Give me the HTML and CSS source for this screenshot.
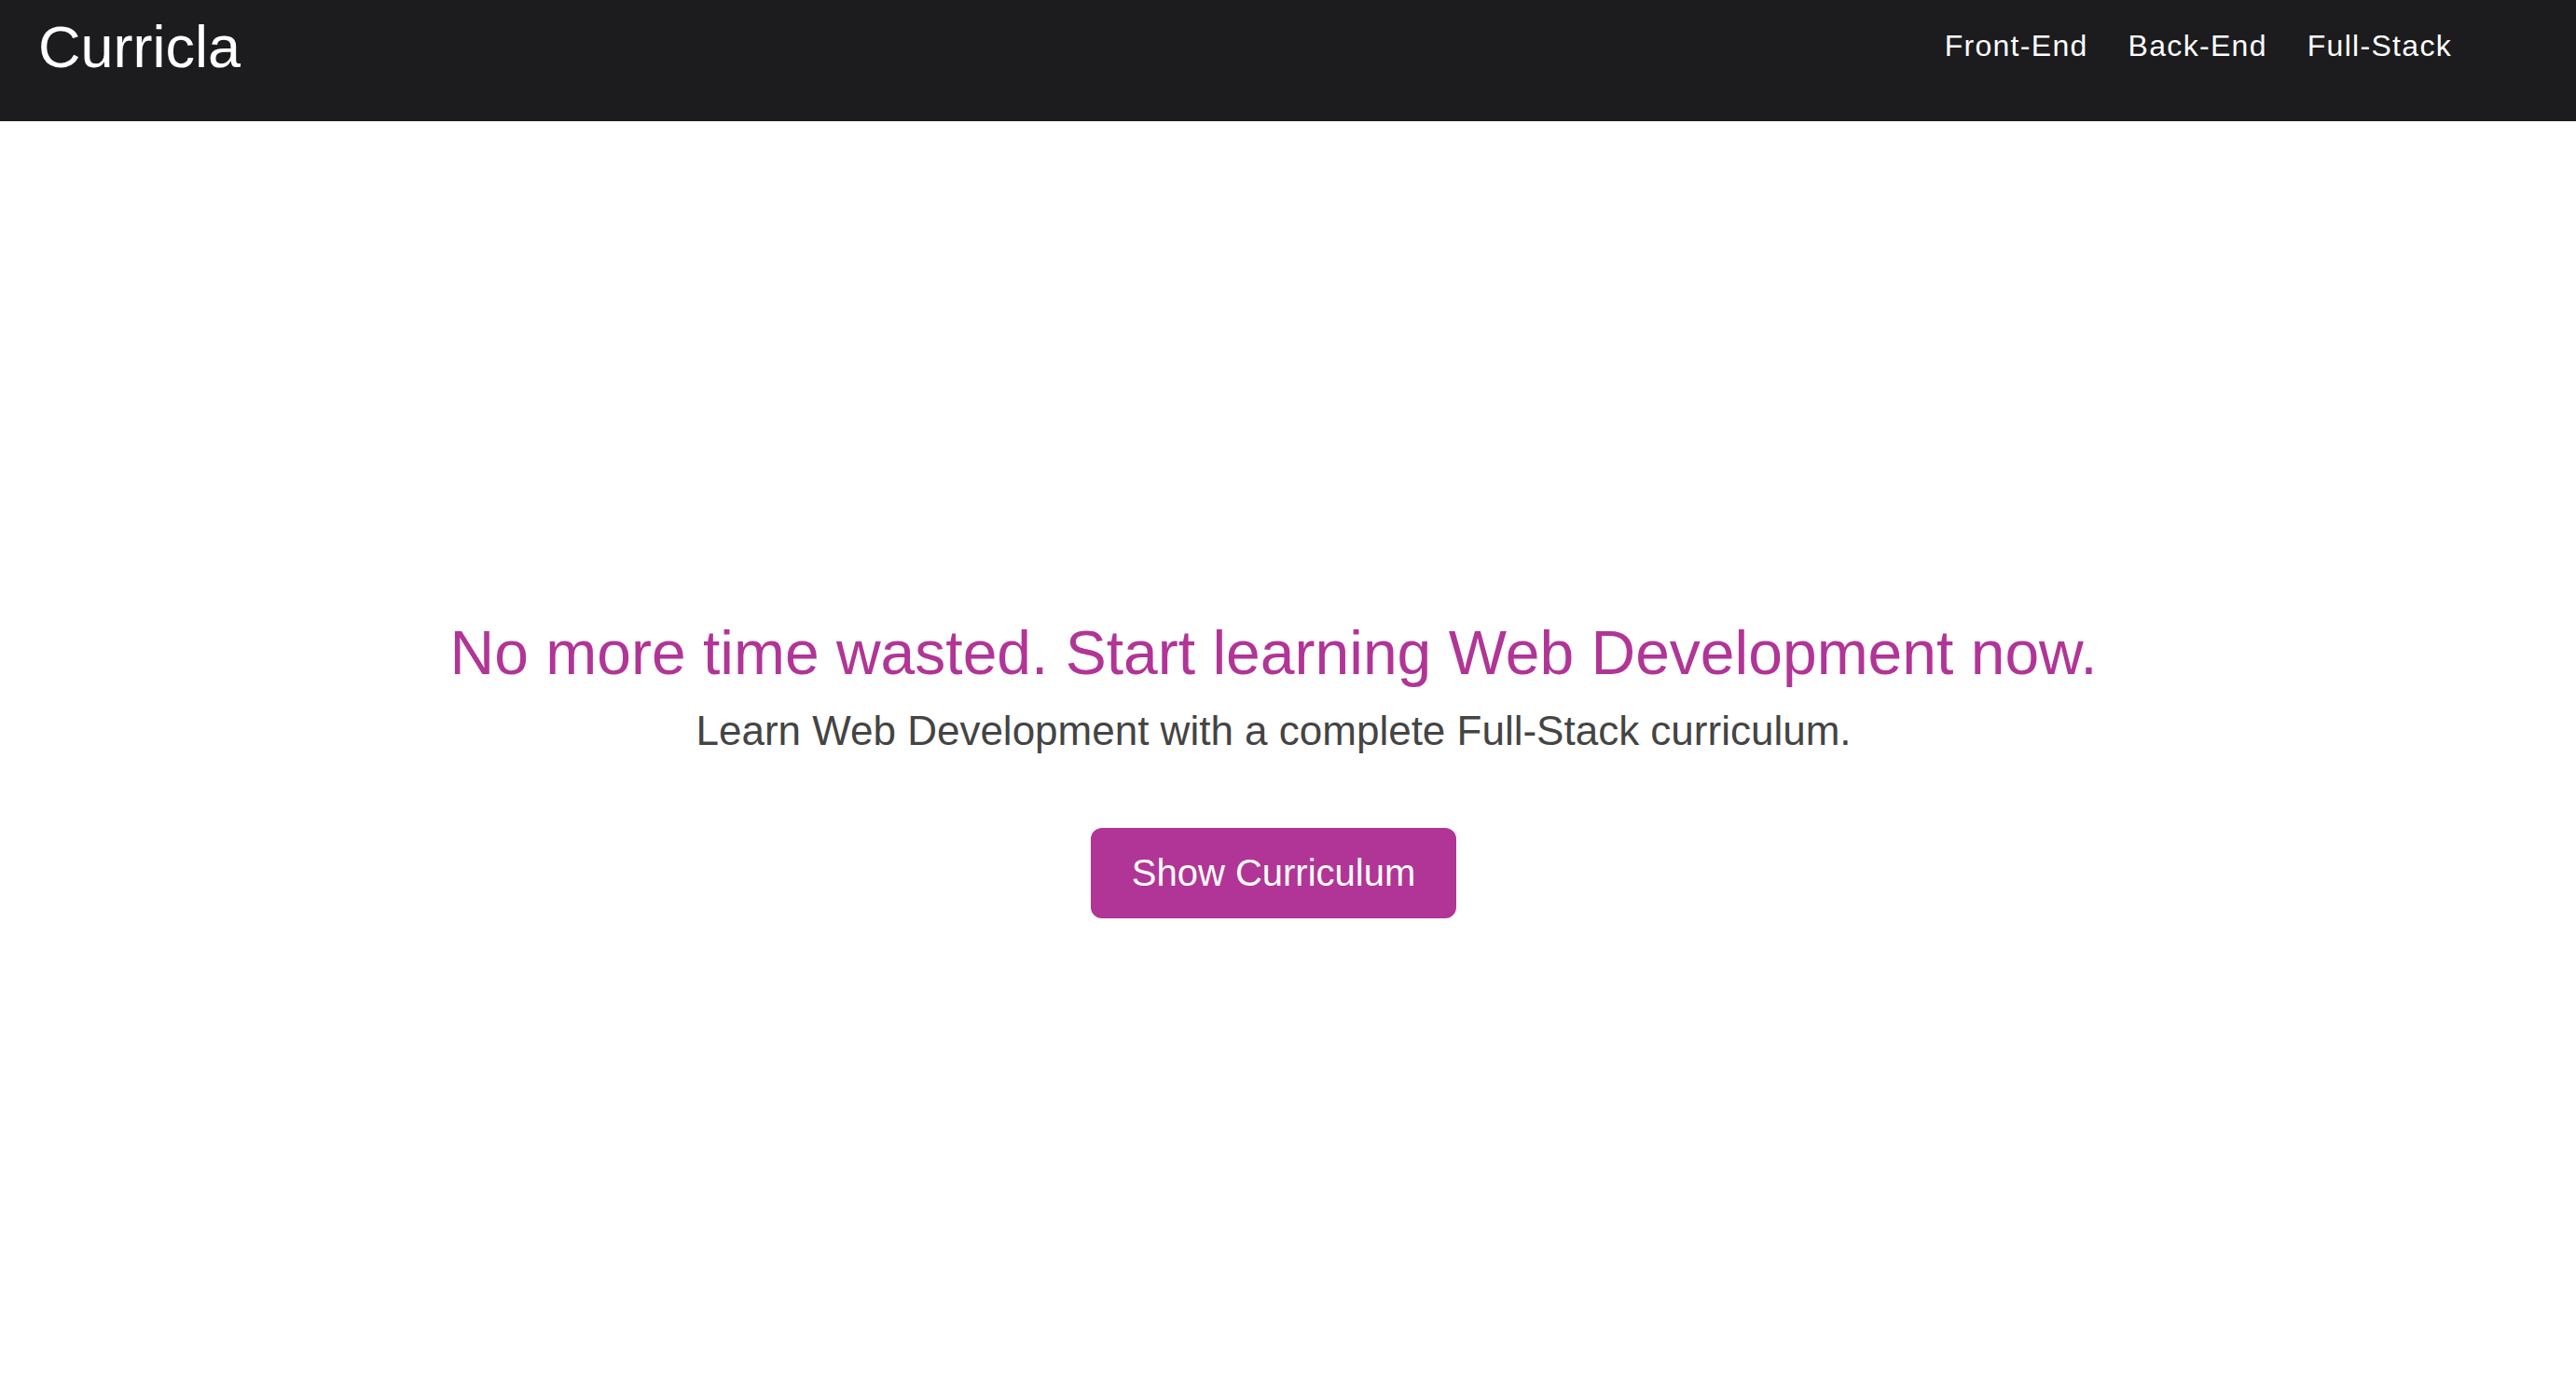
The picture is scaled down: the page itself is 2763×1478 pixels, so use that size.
FILE: index.html
```html
<!DOCTYPE html>
<html lang="en">
<head>
<meta charset="utf-8">
<title>Curricla</title>
<link rel="stylesheet" href="styles.css">
</head>
<body>
<header class="topbar">
  <a class="logo" href="#">Curricla</a>
  <nav class="nav">
    <a href="#" class="nav-link">Front-End</a>
    <a href="#" class="nav-link">Back-End</a>
    <a href="#" class="nav-link">Full-Stack</a>
  </nav>
</header>
<main class="hero">
  <h1 class="hero-title">No more time wasted. Start learning Web Development now.</h1>
  <p class="hero-sub">Learn Web Development with a complete Full-Stack curriculum.</p>
  <a href="#" class="btn">Show Curriculum</a>
</main>
</body>
</html>
```
FILE: styles.css
```css
* { box-sizing: border-box; }
html, body { margin: 0; padding: 0; background: #ffffff; }
body { font-family: "Liberation Sans", Arial, sans-serif; }

.topbar {
  height: 130px;
  background: #1c1c1e;
  display: flex;
  justify-content: space-between;
  align-items: flex-start;
  padding: 0 133px 0 41px;
}
.logo {
  color: #ffffff;
  text-decoration: none;
  font-size: 63px;
  line-height: 1;
  margin-top: 19px;
}
.nav {
  display: flex;
  gap: 43px;
  margin-top: 31px;
}
.nav-link {
  color: #ffffff;
  text-decoration: none;
  font-size: 32px;
  letter-spacing: 1.3px;
  line-height: 1.15;
}

.hero {
  display: flex;
  flex-direction: column;
  align-items: center;
  text-align: center;
  padding: 533px 31px 0 0;
}
.hero-title {
  margin: 0;
  color: #b13597;
  font-weight: normal;
  font-size: 66px;
  line-height: 1.15;
}
.hero-sub {
  margin: 20px 0 0;
  color: #444444;
  font-size: 44px;
  line-height: 1.15;
}
.btn {
  margin-top: 79px;
  display: inline-block;
  background: #b13597;
  color: #ffffff;
  text-decoration: none;
  font-size: 40px;
  line-height: 45px;
  padding: 26px 44px;
  border-radius: 12px;
}
```
